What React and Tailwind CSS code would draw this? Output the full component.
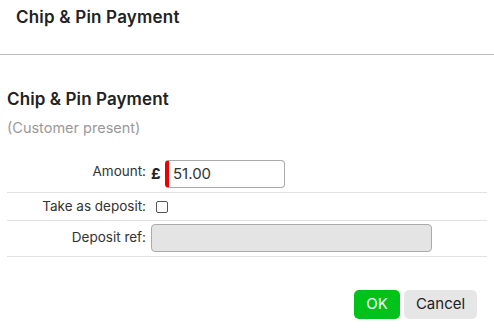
export default function App() {
  return (
    <div className="w-[494px] h-[335px] bg-white text-[#222] font-['Inter','Liberation_Sans',sans-serif] overflow-hidden">
      <div className="h-[55px] border-b-[1.5px] border-[#bbb] pl-4 pt-[5px]">
        <h2 className="text-[17px] font-semibold tracking-[0.2px] leading-[24px]">Chip &amp; Pin Payment</h2>
      </div>

      <div className="pl-[7px] pr-[7px] pt-[33px]">
        <h3 className="text-[17px] font-semibold tracking-[0.1px] leading-[22px]">Chip &amp; Pin Payment</h3>
        <p className="text-[14.5px] text-[#999] mt-[9px] leading-[18px]">(Customer present)</p>

        <table className="w-[480px] mt-[19px] text-[13.5px] border-collapse">
          <tbody>
            <tr className="border-b border-[#e2e2e2] h-[36px]">
              <td className="w-[143px] text-right align-middle pr-1 pb-[5px] text-[#333]">Amount:</td>
              <td className="pl-[1px]">
                <div className="flex items-center">
                  <span className="text-[15px] font-bold w-[14px]">£</span>
                  <input
                    readOnly
                    value="51.00"
                    className="w-[120px] h-[28px] border border-[#aaa] border-l-4 border-l-[#ee0000] rounded-[4px] pl-[4px] text-[15px] text-[#333] outline-none"
                  />
                </div>
              </td>
            </tr>
            <tr className="border-b border-[#e2e2e2] h-[28px]">
              <td className="text-right pr-1 text-[#333]">Take as deposit:</td>
              <td className="pl-[6px]">
                <div className="w-[12px] h-[12px] border border-[#555] rounded-[2px] mt-[1px]" />
              </td>
            </tr>
            <tr className="border-b border-[#e2e2e2] h-[36px]">
              <td className="text-right pr-1 pb-[2px] text-[#333]">Deposit ref:</td>
              <td className="pl-[1px]">
                <div className="w-[281px] h-[28px] bg-[#e4e4e4] border border-[#aaa] rounded-[4px]" />
              </td>
            </tr>
          </tbody>
        </table>

        <div className="flex justify-end gap-[4px] mt-[33px] pr-[10px]">
          <button className="h-[29px] w-[46px] rounded-[5px] bg-[#00c21a] text-white text-[15px]">OK</button>
          <button className="h-[29px] w-[73px] rounded-[5px] bg-[#e6e6e6] text-[#222] text-[15px]">Cancel</button>
        </div>
      </div>
    </div>
  );
}
